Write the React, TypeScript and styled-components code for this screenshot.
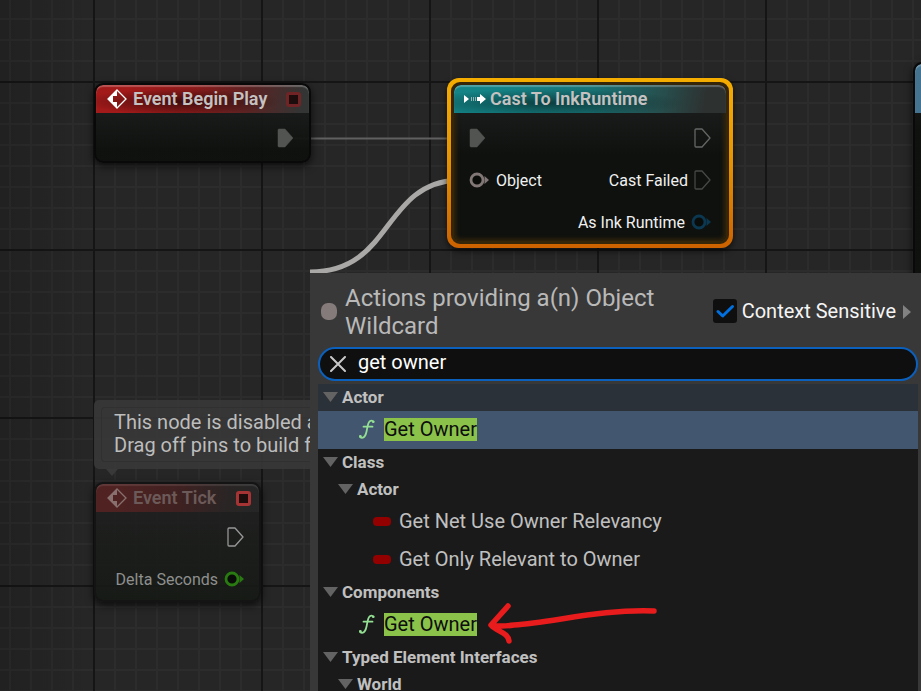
import React, { useState } from "react";
import styled, { createGlobalStyle, css } from "styled-components";

const GlobalStyle = createGlobalStyle`
  * { box-sizing: border-box; }
  html, body, #root { height: 100%; }
  body {
    margin: 0;
    overflow: hidden;
    background: #262626;
    font-family: Roboto, "Noto Sans", sans-serif;
  }
`;

const GraphCanvas = styled.main`
  position: relative;
  min-height: 100vh;
  overflow: hidden;
  background-color: #262626;
  background-image:
    linear-gradient(90deg, rgba(0, 0, 0, 0.14), transparent 90px),
    linear-gradient(90deg, #151515 2px, transparent 2px),
    linear-gradient(#151515 2px, transparent 2px),
    linear-gradient(90deg, #2c2c2c 2px, transparent 2px),
    linear-gradient(#2c2c2c 2px, transparent 2px);
  background-size: 100% 100%, 168px 168px, 168px 168px, 21px 21px, 21px 21px;
  background-position: 0 0, 93px 81px, 93px 81px, 9px 18px, 9px 18px;
`;

const WireLayer = styled.svg`
  position: absolute;
  inset: 0;
  width: 100%;
  height: 100%;
  pointer-events: none;
`;

const AnnotationLayer = styled(WireLayer)`
  z-index: 5;
`;

type Tone = "event" | "cast" | "call";

const headerTones: Record<Tone, string> = {
  event:
    "radial-gradient(ellipse at 40% 60%, rgba(20, 5, 5, 0.65), transparent 55%), linear-gradient(100deg, #a31a1a 15%, #8c1a1a 45%, #5a2323 72%, #333534 96%)",
  cast:
    "radial-gradient(ellipse at 35% 65%, rgba(5, 25, 25, 0.6), transparent 55%), linear-gradient(100deg, #148487 15%, #187375 50%, #26504f 75%, #2d3130 92%)",
  call: "linear-gradient(90deg, #447390, #4e86a6)",
};

const Node = styled.section<{ $x: number; $y: number; $w: number; $h: number; $disabled?: boolean }>`
  position: absolute;
  left: ${(p) => p.$x}px;
  top: ${(p) => p.$y}px;
  width: ${(p) => p.$w}px;
  min-height: ${(p) => p.$h}px;
  display: flex;
  flex-direction: column;
  overflow: hidden;
  border: 2px solid #090909;
  border-radius: 9px;
  background: linear-gradient(rgba(24, 26, 25, 0.94) 30px, rgba(13, 16, 13, 0.94) 65px);
  box-shadow: 0 3px 9px rgba(0, 0, 0, 0.7);
  ${(p) => p.$disabled && css`
    background: linear-gradient(rgba(29, 30, 29, 0.85) 30px, rgba(21, 25, 20, 0.9));
    border-color: #131413;
  `}
`;

const SelectionRing = styled.div`
  position: absolute;
  left: 447px;
  top: 78px;
  width: 286px;
  height: 170px;
  padding: 4px;
  border-radius: 12px;
  background: linear-gradient(#f4ad00, #e89600 45%, #cc6200);
  box-shadow: 0 3px 6px rgba(0, 0, 0, 0.6);
`;

const SelectedBody = styled.section`
  display: flex;
  flex-direction: column;
  height: 100%;
  overflow: hidden;
  border: 3px solid #35260a;
  border-radius: 9px;
  background: linear-gradient(#191b1a 30px, #0e110e 70px);
  box-shadow: inset 0 0 4px 2px #35250a;
`;

const NodeHeader = styled.header<{ $tone: Tone; $disabled?: boolean }>`
  display: flex;
  align-items: center;
  gap: ${(p) => (p.$tone === "cast" ? 4 : 6)}px;
  height: 28px;
  flex: none;
  padding: 0 8px 0 ${(p) => (p.$tone === "cast" ? 10 : 11)}px;
  background: ${(p) => headerTones[p.$tone]};
  box-shadow: inset 0 2px 1px rgba(255, 255, 255, 0.25);
  border-radius: 7px 7px 0 0;
  ${(p) => p.$disabled && css`
    background: linear-gradient(100deg, #502322 10%, #402121 50%, #2a2525 80%, #252626);
    box-shadow: inset 0 2px 1px rgba(255, 255, 255, 0.1);
  `}
`;

const CallHeader = styled(NodeHeader)`
  height: 49px;
`;

const NodeTitle = styled.h2<{ $disabled?: boolean }>`
  flex: 1;
  margin: 0;
  font-size: 18px;
  line-height: 28px;
  font-weight: 600;
  white-space: nowrap;
  color: ${(p) => (p.$disabled ? "#6c5a59" : "#c5c2c1")};
`;

const DelegatePin = styled.button<{ $bright?: boolean }>`
  width: 15px;
  height: 15px;
  padding: 0;
  border: 3px solid ${(p) => (p.$bright ? "#a63434" : "#702425")};
  border-radius: 3px;
  background: #1d0d0d;
`;

const Pins = styled.div<{ $disabled?: boolean }>`
  display: grid;
  grid-template-columns: 1fr auto;
  grid-auto-rows: 42px;
  align-items: center;
  padding: 4px 15px 0 15px;
  font-size: 16px;
  white-space: nowrap;
  color: ${(p) => (p.$disabled ? "#8e8f8e" : "#f0f0f0")};
`;

const InputPin = styled.div`
  display: flex;
  align-items: center;
  gap: 7px;
`;

const OutputPin = styled(InputPin)`
  grid-column: 2;
  justify-content: flex-end;
  gap: 6px;
`;

const Bubble = styled.aside`
  position: absolute;
  left: 94px;
  top: 400px;
`;

const BubbleFrame = styled.div`
  width: 216px;
  padding: 7px 0 7px 7px;
  overflow: hidden;
  border-radius: 5px 0 0 5px;
  background: rgba(57, 57, 57, 0.85);
`;

const BubbleText = styled.p`
  margin: 0;
  padding: 3px 12px 4px;
  border: 1px solid #303030;
  border-right: 0;
  border-radius: 4px 0 0 4px;
  overflow: hidden;
  font-size: 20px;
  line-height: 23px;
  color: #bdbdbd;
  white-space: nowrap;
`;

const BubbleTail = styled.svg`
  position: absolute;
  left: 12px;
  top: 100%;
`;

const Menu = styled.section`
  position: absolute;
  z-index: 3;
  left: 310px;
  right: 0;
  top: 273px;
  bottom: 0;
  display: flex;
  flex-direction: column;
  padding: 11px 3px 0 8px;
  overflow: hidden;
  background: #383838;
`;

const MenuHeader = styled.header`
  display: flex;
  align-items: center;
  padding: 0 7px 7px 3px;
`;

const TypeDot = styled.span`
  flex: none;
  width: 16px;
  height: 17px;
  margin: 0 8px 2px 0;
  border-radius: 7px;
  background: #857b7b;
`;

const MenuTitle = styled.h1`
  flex: 1;
  margin: 0;
  font-size: 24px;
  line-height: 28px;
  font-weight: 400;
  color: #b9b9b9;
`;

const ContextLabel = styled.label`
  display: flex;
  align-items: center;
  gap: 5px;
  flex: none;
  margin-bottom: 2px;
  font-size: 20px;
  line-height: 24px;
  color: #f5f5f5;
`;

const CheckFrame = styled.span`
  position: relative;
  display: flex;
  svg { position: absolute; inset: 0; pointer-events: none; }
`;

const CheckInput = styled.input`
  appearance: none;
  width: 24px;
  height: 24px;
  margin: 0;
  border-radius: 3px;
  background: #0f0f0f;
`;

const PlainButton = styled.button`
  display: flex;
  align-items: center;
  padding: 0;
  border: 0;
  background: none;
  color: inherit;
`;

const ExpandButton = styled(PlainButton)`
  margin-left: 7px;
`;

const SearchBox = styled.div`
  display: flex;
  align-items: center;
  gap: 12px;
  flex: none;
  height: 34px;
  margin-bottom: 3px;
  padding: 0 10px;
  border: 2px solid #0b60bd;
  border-radius: 17px;
  background: #0f0f0f;
`;

const SearchInput = styled.input`
  flex: 1;
  min-width: 0;
  height: 28px;
  padding: 0 0 4px;
  border: 0;
  outline: 0;
  background: none;
  font: 20px/24px Roboto, sans-serif;
  color: #fff;
`;

const Tree = styled.div`
  flex: 1;
  min-height: 0;
  overflow: hidden;
  background: #1a1a1a;
`;

const Category = styled.button<{ $level?: number; $active?: boolean }>`
  display: flex;
  align-items: center;
  gap: 4px;
  width: 100%;
  height: 27px;
  padding: 0 0 0 ${(p) => 5 + (p.$level ?? 0) * 15}px;
  border: 0;
  background: ${(p) => (p.$active ? "#2b3138" : "transparent")};
  font: 700 17px/27px Roboto, sans-serif;
  color: #c0c0c0;
`;

const Action = styled.button<{ $level?: number; $active?: boolean }>`
  display: flex;
  align-items: center;
  gap: 8px;
  width: 100%;
  height: 38px;
  padding: 0 0 2px ${(p) => 40 + (p.$level ?? 0) * 15}px;
  border: 0;
  background: ${(p) => (p.$active ? "#42576f" : "transparent")};
  font: 20px/23px Roboto, sans-serif;
  color: #c0c0c0;
`;

const Match = styled.mark`
  background: #8bc24a;
  color: #0d0d0d;
`;

const EventIcon = ({ color }: { color: string }) => (
  <svg width="20" height="20" viewBox="0 0 20 20" aria-hidden="true">
    <path d="M10 1 19 10 10 19 1 10Z" fill="none" stroke={color} strokeWidth="1.3" />
    <path d="M10 1V7H6V13H10V19L1 10Z" fill={color} />
  </svg>
);

const CastIcon = () => (
  <svg width="22" height="14" viewBox="0 0 22 14" aria-hidden="true">
    <path d="M0 3 5 7 0 11Z M13 5H16V2L22 7 16 12V9H13Z" fill="#fff" />
    <path d="M7.5 5V9M9.5 5V9M11.5 5V9" stroke="#8fb5b5" strokeWidth="1" />
  </svg>
);

const ExecPin = ({ filled, color = "#777" }: { filled?: boolean; color?: string }) => (
  <svg width="17" height="20" viewBox="0 0 17 20" aria-hidden="true">
    <path
      d="M1 2Q1 1 2 1H8L16 10 8 19H2Q1 19 1 18Z"
      fill={filled ? color : "none"}
      stroke={color}
      strokeWidth={filled ? 0.5 : 1.3}
      strokeLinejoin="round"
    />
  </svg>
);

const DataPin = ({ color }: { color: string }) => (
  <svg width="20" height="16" viewBox="0 0 20 16" aria-hidden="true">
    <circle cx="8" cy="8" r="6" fill="#0a0c0a" stroke={color} strokeWidth="2.8" />
    <path d="M15.5 4 20 8 15.5 12Z" fill={color} />
  </svg>
);

const Caret = () => (
  <svg width="15" height="11" viewBox="0 0 15 11" aria-hidden="true">
    <path d="M0 0H15L7.5 10Z" fill="#636363" />
  </svg>
);

const FunctionIcon = () => (
  <svg width="18" height="22" viewBox="0 0 18 22" aria-hidden="true">
    <path
      d="M15.5 3.8Q14 1.8 11.8 3.2C9.8 4.5 9.5 9 8.6 13.2Q7.4 19.4 4 19.8Q2.4 19.9 2 18.4M5.5 8.7H14.5"
      fill="none"
      stroke="#93df93"
      strokeWidth="1.8"
      strokeLinecap="round"
    />
    <circle cx="15.2" cy="3.8" r="1.3" fill="#93df93" />
    <circle cx="2.4" cy="18.5" r="1.4" fill="#93df93" />
  </svg>
);

const PropertyIcon = () => (
  <svg width="18" height="10" viewBox="0 0 18 10" aria-hidden="true">
    <rect width="18" height="9" y="1" rx="4" fill="#920000" />
  </svg>
);

const Highlighted = () => <Match>Get Owner</Match>;

export default function App() {
  const [query, setQuery] = useState("get owner");
  const [sensitive, setSensitive] = useState(true);

  return (
    <>
      <GlobalStyle />
      <GraphCanvas>
        <WireLayer aria-hidden="true">
          <path d="M294 138.5H452" stroke="#606060" strokeWidth="2" />
          <path d="M310 272C393 272 382 184 457 180" fill="none" stroke="#aaa8a6" strokeWidth="5" />
        </WireLayer>

        <Node $x={94} $y={83} $w={217} $h={80}>
          <NodeHeader $tone="event">
            <EventIcon color="#fff" />
            <NodeTitle>Event Begin Play</NodeTitle>
            <DelegatePin aria-label="Output delegate" />
          </NodeHeader>
          <Pins>
            <OutputPin><ExecPin filled color="#525452" /></OutputPin>
          </Pins>
        </Node>

        <SelectionRing>
          <SelectedBody>
            <NodeHeader $tone="cast">
              <CastIcon />
              <NodeTitle>Cast To InkRuntime</NodeTitle>
            </NodeHeader>
            <Pins>
              <InputPin><ExecPin filled color="#525452" /></InputPin>
              <OutputPin><ExecPin color="#646664" /></OutputPin>
              <InputPin><DataPin color="#817776" />Object</InputPin>
              <OutputPin>Cast Failed<ExecPin color="#464846" /></OutputPin>
              <OutputPin>As Ink Runtime<DataPin color="#0b3850" /></OutputPin>
            </Pins>
          </SelectedBody>
        </SelectionRing>

        <Node $x={913} $y={62} $w={220} $h={300}>
          <CallHeader $tone="call" />
        </Node>

        <Bubble>
          <BubbleFrame>
            <BubbleText>
              This node is disabled and<br />
              Drag off pins to build functionality.
            </BubbleText>
          </BubbleFrame>
          <BubbleTail width="12" height="7" viewBox="0 0 12 7" aria-hidden="true">
            <path d="M0 0H12L6 7Z" fill="#393939" />
          </BubbleTail>
        </Bubble>

        <Node $x={94} $y={482} $w={167} $h={120} $disabled>
          <NodeHeader $tone="event" $disabled>
            <EventIcon color="#88706f" />
            <NodeTitle $disabled>Event Tick</NodeTitle>
            <DelegatePin $bright aria-label="Output delegate" />
          </NodeHeader>
          <Pins $disabled>
            <OutputPin><ExecPin color="#969796" /></OutputPin>
            <OutputPin>Delta Seconds<DataPin color="#2a7a12" /></OutputPin>
          </Pins>
        </Node>

        <Menu aria-label="Actions">
          <MenuHeader>
            <TypeDot />
            <MenuTitle>Actions providing a(n) Object Wildcard</MenuTitle>
            <ContextLabel>
              <CheckFrame>
                <CheckInput type="checkbox" checked={sensitive} onChange={(e) => setSensitive(e.target.checked)} />
                {sensitive && (
                  <svg width="24" height="24" viewBox="0 0 24 24" aria-hidden="true">
                    <path d="M5 12.5 9.7 17 19.5 7.5" fill="none" stroke="#0070e0" strokeWidth="3" strokeLinecap="round" strokeLinejoin="round" />
                  </svg>
                )}
              </CheckFrame>
              Context Sensitive
            </ContextLabel>
            <ExpandButton aria-label="Show context targets">
              <svg width="8" height="14" viewBox="0 0 8 14" aria-hidden="true">
                <path d="M0 0 8 7 0 14Z" fill="#828282" />
              </svg>
            </ExpandButton>
          </MenuHeader>
          <SearchBox>
            <PlainButton aria-label="Clear search" onClick={() => setQuery("")}>
              <svg width="16" height="16" viewBox="0 0 16 16" aria-hidden="true">
                <path d="M1 1 15 15M15 1 1 15" stroke="#c8c8c8" strokeWidth="2" strokeLinecap="round" />
              </svg>
            </PlainButton>
            <SearchInput aria-label="Search actions" value={query} onChange={(e) => setQuery(e.target.value)} />
          </SearchBox>
          <Tree>
            <Category $active><Caret />Actor</Category>
            <Action $active><FunctionIcon /><Highlighted /></Action>
            <Category><Caret />Class</Category>
            <Category $level={1}><Caret />Actor</Category>
            <Action $level={1}><PropertyIcon />Get Net Use Owner Relevancy</Action>
            <Action $level={1}><PropertyIcon />Get Only Relevant to Owner</Action>
            <Category><Caret />Components</Category>
            <Action><FunctionIcon /><Highlighted /></Action>
            <Category><Caret />Typed Element Interfaces</Category>
            <Category $level={1}><Caret />World</Category>
          </Tree>
        </Menu>

        <AnnotationLayer aria-hidden="true">
          <path
            d="M654 611C602 609 555 622 514 625Q500 627 491 625L508 606M491 625C497 632 508 632 509 641"
            fill="none"
            stroke="#e81c1c"
            strokeWidth="5.5"
            strokeLinecap="round"
            strokeLinejoin="round"
          />
        </AnnotationLayer>
      </GraphCanvas>
    </>
  );
}
